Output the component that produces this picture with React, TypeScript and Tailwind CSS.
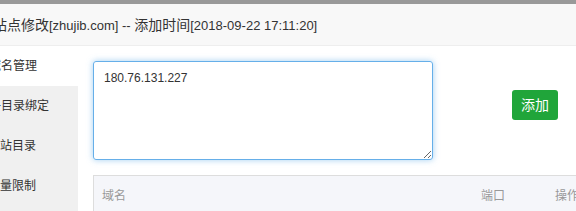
import React from 'react';

const menu = ['域名管理', '子目录绑定', '网站目录', '流量限制'];

export default function App() {
  const [domains, setDomains] = React.useState('180.76.131.227');

  return (
    <div
      className="w-[576px] h-[211px] overflow-hidden bg-white text-[#333]"
      style={{ fontFamily: '"Liberation Sans", "Noto Sans CJK SC", sans-serif' }}
    >
      <div className="h-[4px] bg-[#999]" />
      <div className="h-[42px] flex items-center bg-[#f8f8f8] border-b border-[#eee] text-[14px] whitespace-nowrap">
        <span className="-ml-[7px] pt-[1px]">
          站点修改<span className="text-[13px]">[zhujib.com] -- </span>添加时间
          <span className="text-[13px]">[2018-09-22 17:11:20]</span>
        </span>
      </div>

      <div className="flex">
        <div className="w-[78px] shrink-0 bg-[#f0f0f0] h-[200px]">
          {menu.map((item, i) => (
            <div
              key={item}
              className={
                'h-[40px] flex items-center text-[12px] whitespace-nowrap overflow-hidden ' +
                (i === 0 ? 'bg-white' : '')
              }
            >
              <span className={i < 2 ? '-ml-[11px]' : '-ml-[12px]'}>{item}</span>
            </div>
          ))}
        </div>

        <div className="flex-1 pl-[15px] pt-[15px]">
          <div className="flex items-start">
            <textarea
              value={domains}
              onChange={e => setDomains(e.target.value)}
              className="w-[340px] h-[99px] rounded-[3px] border border-[#66afe9] px-[10px] pt-[6px] text-[12px] leading-[20px] text-[#333] outline-none shadow-[0_0_6px_rgba(102,175,233,0.6)]"
            />
            <button
              type="button"
              className="ml-[79px] mt-[29px] w-[46px] h-[30px] rounded-[3px] bg-[#20a53a] text-white text-[14px]"
            >
              添加
            </button>
          </div>

          <div className="mt-[15px] h-[40px] flex items-center bg-[#f5f6fa] border-t border-l border-[#ddd] text-[12px] text-[#999] whitespace-nowrap">
            <span className="ml-[8px] w-[379px]">域名</span>
            <span className="w-[74px]">端口</span>
            <span>操作</span>
          </div>
        </div>
      </div>
    </div>
  );
}
